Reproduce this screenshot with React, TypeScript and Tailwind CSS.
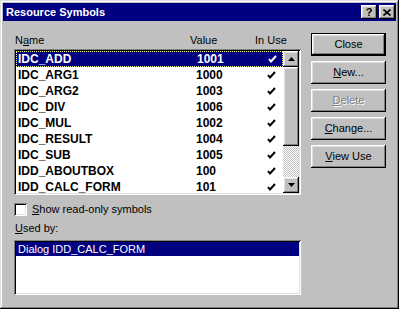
import React from "react";

const symbols = [
  { name: "IDC_ADD", value: "1001" },
  { name: "IDC_ARG1", value: "1000" },
  { name: "IDC_ARG2", value: "1003" },
  { name: "IDC_DIV", value: "1006" },
  { name: "IDC_MUL", value: "1002" },
  { name: "IDC_RESULT", value: "1004" },
  { name: "IDC_SUB", value: "1005" },
  { name: "IDD_ABOUTBOX", value: "100" },
  { name: "IDD_CALC_FORM", value: "101" },
];

const raised =
  "shadow-[inset_-1px_-1px_#000,inset_1px_1px_#fff,inset_-2px_-2px_#808080,inset_2px_2px_#dfdfdf]";
const sunken =
  "shadow-[inset_1px_1px_#808080,inset_-1px_-1px_#fff,inset_2px_2px_#000,inset_-2px_-2px_#dfdfdf]";

function Check() {
  return (
    <svg width="9" height="8" viewBox="0 0 9 8" className="block">
      <path d="M1 4 L3 6.5 L8 1" fill="none" stroke="currentColor" strokeWidth="2" />
    </svg>
  );
}

function Btn({ children, disabled, isDefault }: { children: React.ReactNode; disabled?: boolean; isDefault?: boolean }) {
  return (
    <div className={`h-[23px] w-[75px] ${isDefault ? "border border-black" : ""}`}>
      <div
        className={`h-full w-full flex items-center justify-center text-[11px] ${raised} ${
          disabled ? "text-[#808080] [text-shadow:1px_1px_0_#fff]" : "text-black"
        }`}
      >
        {children}
      </div>
    </div>
  );
}

export default function App() {
  return (
    <div
      className="w-[399px] h-[309px] bg-[#c0c0c0] flex flex-col p-[3px] font-['Liberation_Sans',Arial,sans-serif] shadow-[inset_-1px_-1px_#000,inset_1px_1px_#dfdfdf,inset_-2px_-2px_#808080,inset_2px_2px_#fff]"
    >
      {/* Title bar */}
      <div className="h-[18px] bg-[#000080] flex items-center pl-[3px] pr-[1px]">
        <span className="text-white font-bold text-[11px] flex-1">Resource Symbols</span>
        <div className="flex gap-[2px]">
          <div className={`w-[16px] h-[14px] flex items-center justify-center font-bold text-[11px] text-black bg-[#c0c0c0] ${raised}`}>
            ?
          </div>
          <div className={`w-[16px] h-[14px] flex items-center justify-center bg-[#c0c0c0] ${raised}`}>
            <svg width="8" height="7" viewBox="0 0 8 7">
              <path d="M0.5 0.5 L7.5 6.5 M7.5 0.5 L0.5 6.5" stroke="#000" strokeWidth="1.6" />
            </svg>
          </div>
        </div>
      </div>

      <div className="flex pl-[11px]">
        {/* Left column */}
        <div className="w-[287px] flex flex-col">
          <div className="mt-[11px] h-[16px] flex items-center text-[11px] text-black pl-[1px]">
            <span className="w-[175px]">
              N<span className="underline">a</span>me
            </span>
            <span className="w-[65px]">Value</span>
            <span>In Use</span>
          </div>

          {/* Symbol list */}
          <div className={`mt-[1px] h-[146px] bg-white p-[2px] flex ${sunken}`}>
            <div className="flex-1 overflow-hidden">
              {symbols.map((s, i) => (
                <div
                  key={s.name}
                  className={`h-[16px] flex items-center text-[12px] font-bold ${
                    i === 0 ? "bg-[#000080] text-white border border-dotted border-[#ffff80]" : "text-black"
                  }`}
                >
                  <span className={`w-[180px] ${i === 0 ? "pl-[1px]" : "pl-[2px]"}`}>{s.name}</span>
                  <span className="w-[71px]">{s.value}</span>
                  <Check />
                </div>
              ))}
            </div>
            {/* Scrollbar */}
            <div className="w-[16px] flex flex-col">
              <div className={`h-[16px] bg-[#c0c0c0] flex items-center justify-center ${raised}`}>
                <svg width="7" height="4" viewBox="0 0 7 4">
                  <path d="M3.5 0 L7 4 L0 4 Z" fill="#000" />
                </svg>
              </div>
              <div className={`h-[79px] bg-[#c0c0c0] ${raised}`} />
              <div className="flex-1 bg-[repeating-conic-gradient(#c0c0c0_0_25%,#fff_0_50%)] bg-[length:2px_2px]" />
              <div className={`h-[16px] bg-[#c0c0c0] flex items-center justify-center ${raised}`}>
                <svg width="7" height="4" viewBox="0 0 7 4">
                  <path d="M0 0 L7 0 L3.5 4 Z" fill="#000" />
                </svg>
              </div>
            </div>
          </div>

          {/* Checkbox */}
          <div className="mt-[8px] h-[13px] flex items-center gap-[5px] text-[11px] text-black">
            <div className={`w-[13px] h-[13px] bg-white ${sunken}`} />
            <span>
              <span className="underline">S</span>how read-only symbols
            </span>
          </div>

          <div className="mt-[6px] h-[12px] flex items-center text-[11px] text-black pl-[1px]">
            <span>
              <span className="underline">U</span>sed by:
            </span>
          </div>

          {/* Used by list */}
          <div className={`mt-[6px] h-[55px] bg-white p-[2px] ${sunken}`}>
            <div className="h-[14px] bg-[#000080] text-white text-[11px] flex items-center pl-[2px]">
              Dialog IDD_CALC_FORM
            </div>
          </div>
        </div>

        {/* Buttons */}
        <div className="ml-[10px] mt-[12px] flex flex-col gap-[5px]">
          <Btn isDefault>Close</Btn>
          <Btn>
            <span>
              <span className="underline">N</span>ew...
            </span>
          </Btn>
          <Btn disabled>
            <span>
              <span className="underline">D</span>elete
            </span>
          </Btn>
          <Btn>
            <span>
              <span className="underline">C</span>hange...
            </span>
          </Btn>
          <Btn>
            <span>
              <span className="underline">V</span>iew Use
            </span>
          </Btn>
        </div>
      </div>
    </div>
  );
}
